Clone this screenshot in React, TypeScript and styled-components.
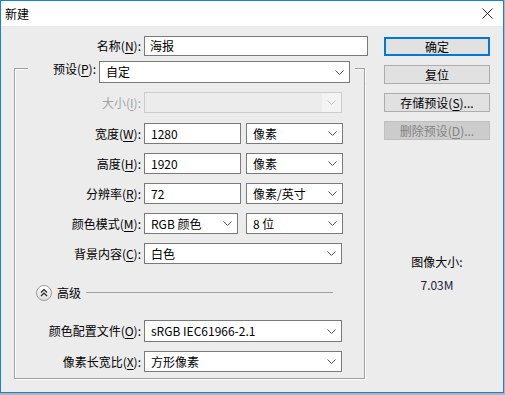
import React from "react";
import styled, { createGlobalStyle } from "styled-components";

const GlobalStyle = createGlobalStyle`
  html, body {
    margin: 0;
    padding: 0;
  }
  body {
    width: 505px;
    height: 395px;
    overflow: hidden;
    background: #b4b4b4;
    font-family: "Noto Sans CJK SC", "Noto Sans", sans-serif;
    font-size: 12px;
    color: #000;
  }
  u {
    text-underline-offset: 2px;
  }
`;

const LINE = "#a0a0a0";

const Chevron = ({ disabled }: { disabled?: boolean }) => (
  <svg width="9" height="5" viewBox="0 0 9 5">
    <polyline
      points="0.5,0.5 4.5,4.5 8.5,0.5"
      fill="none"
      stroke={disabled ? "#c4c4c4" : "#555"}
      strokeWidth="1"
    />
  </svg>
);

const CloseIcon = () => (
  <svg width="11" height="11" viewBox="0 0 11 11">
    <path d="M0.5 0.5 L10.5 10.5 M10.5 0.5 L0.5 10.5" stroke="#111" strokeWidth="0.9" />
  </svg>
);

const AdvancedIcon = () => (
  <svg width="16" height="16" viewBox="0 0 16 16">
    <defs>
      <linearGradient id="adv" x1="0" y1="0" x2="0" y2="1">
        <stop offset="0" stopColor="#ffffff" />
        <stop offset="1" stopColor="#dcdcdc" />
      </linearGradient>
    </defs>
    <circle cx="8" cy="8" r="7.5" fill="url(#adv)" stroke="#9c9c9c" />
    <polyline points="5,7.5 8,4.5 11,7.5" fill="none" stroke="#222" strokeWidth="1.2" />
    <polyline points="5,11 8,8 11,11" fill="none" stroke="#222" strokeWidth="1.2" />
  </svg>
);

const App = () => {
  return (
    <>
      <GlobalStyle />
      <Window>
        <TitleBar>
          <Title>新建</Title>
          <CloseIcon />
        </TitleBar>
        <Body>
          <LeftColumn>
            <Row>
              <Label $w={127}>
                名称(<u>N</u>):
              </Label>
              <TextBox $w={224} $h={20} $pad={5}>
                海报
              </TextBox>
            </Row>

            <GroupBox>
              <GroupHeader>
                <LeftCorner />
                <Label $w={68}>
                  预设(<u>P</u>):
                </Label>
                <Select $w={251} $h={22}>
                  <span>自定</span>
                  <Chevron />
                </Select>
                <RightCorner />
              </GroupHeader>

              <GroupBody>
                <Row $mb={10}>
                  <Label $w={126} $disabled>
                    大小(<u>I</u>):
                  </Label>
                  <Select $w={198} $h={21} $disabled>
                    <span />
                    <ArrowBox>
                      <Chevron disabled />
                    </ArrowBox>
                  </Select>
                </Row>
                <Row $mb={9}>
                  <Label $w={126}>
                    宽度(<u>W</u>):
                  </Label>
                  <TextBox $w={97} $h={21} $pad={6}>
                    1280
                  </TextBox>
                  <Select $w={97} $h={21} $ml={5}>
                    <span>像素</span>
                    <Chevron />
                  </Select>
                </Row>
                <Row $mb={9}>
                  <Label $w={126}>
                    高度(<u>H</u>):
                  </Label>
                  <TextBox $w={97} $h={21} $pad={6}>
                    1920
                  </TextBox>
                  <Select $w={97} $h={21} $ml={5}>
                    <span>像素</span>
                    <Chevron />
                  </Select>
                </Row>
                <Row $mb={9}>
                  <Label $w={126}>
                    分辨率(<u>R</u>):
                  </Label>
                  <TextBox $w={97} $h={21} $pad={6}>
                    72
                  </TextBox>
                  <Select $w={97} $h={21} $ml={5}>
                    <span>像素/英寸</span>
                    <Chevron />
                  </Select>
                </Row>
                <Row $mb={9}>
                  <Label $w={126}>
                    颜色模式(<u>M</u>):
                  </Label>
                  <Select $w={94} $h={21}>
                    <span>RGB 颜色</span>
                    <Chevron />
                  </Select>
                  <Select $w={97} $h={21} $ml={8}>
                    <span>8 位</span>
                    <Chevron />
                  </Select>
                </Row>
                <Row>
                  <Label $w={126}>
                    背景内容(<u>C</u>):
                  </Label>
                  <Select $w={198} $h={21}>
                    <span>白色</span>
                    <Chevron />
                  </Select>
                </Row>

                <AdvancedRow>
                  <AdvancedIcon />
                  <AdvancedText>高级</AdvancedText>
                  <Divider />
                </AdvancedRow>

                <Row $mb={9}>
                  <Label $w={126}>
                    颜色配置文件(<u>O</u>):
                  </Label>
                  <Select $w={198} $h={22}>
                    <span>sRGB IEC61966-2.1</span>
                    <Chevron />
                  </Select>
                </Row>
                <Row>
                  <Label $w={126}>
                    像素长宽比(<u>X</u>):
                  </Label>
                  <Select $w={198} $h={21}>
                    <span>方形像素</span>
                    <Chevron />
                  </Select>
                </Row>
              </GroupBody>
            </GroupBox>
          </LeftColumn>

          <RightColumn>
            <Button $default>确定</Button>
            <Button>复位</Button>
            <Button>
              存储预设(<u>S</u>)...
            </Button>
            <Button $disabled>
              删除预设(<u>D</u>)...
            </Button>
            <ImageSize>
              <ImageSizeLabel>图像大小:</ImageSizeLabel>
              <ImageSizeValue>7.03M</ImageSizeValue>
            </ImageSize>
          </RightColumn>
        </Body>
      </Window>
    </>
  );
};

const Window = styled.div`
  box-sizing: border-box;
  width: 504px;
  height: 393px;
  border: 1px solid #1883d7;
  background: #ececec;
  display: flex;
  flex-direction: column;
`;

const TitleBar = styled.div`
  height: 25px;
  background: #ffffff;
  display: flex;
  align-items: center;
  justify-content: space-between;
  padding: 0 10px 0 4px;
`;

const Title = styled.div`
  font-size: 12px;
  line-height: 16px;
`;

const Body = styled.div`
  flex: 1;
  display: flex;
  padding: 10px 0 0 13px;
`;

const LeftColumn = styled.div`
  width: 354px;
  display: flex;
  flex-direction: column;
`;

const Row = styled.div<{ $mb?: number }>`
  display: flex;
  align-items: center;
  margin-bottom: ${(p) => p.$mb || 0}px;
`;

const Label = styled.div<{ $w: number; $disabled?: boolean }>`
  width: ${(p) => p.$w}px;
  padding-right: 3px;
  flex-shrink: 0;
  text-align: right;
  white-space: nowrap;
  line-height: 16px;
  color: ${(p) => (p.$disabled ? "#a3a3a3" : "#000")};
`;

const TextBox = styled.div<{ $w: number; $h: number; $pad: number }>`
  box-sizing: border-box;
  width: ${(p) => p.$w}px;
  height: ${(p) => p.$h}px;
  border: 1px solid #7a7a7a;
  background: #fff;
  padding-left: ${(p) => p.$pad}px;
  display: flex;
  align-items: center;
  line-height: 16px;
  white-space: nowrap;
`;

const Select = styled.div<{ $w: number; $h: number; $ml?: number; $disabled?: boolean }>`
  box-sizing: border-box;
  width: ${(p) => p.$w}px;
  height: ${(p) => p.$h}px;
  margin-left: ${(p) => p.$ml || 0}px;
  border: 1px solid ${(p) => (p.$disabled ? "#cccccc" : "#7a7a7a")};
  background: ${(p) => (p.$disabled ? "#ececec" : "#fff")};
  padding: 0 ${(p) => (p.$disabled ? 0 : 5)}px 0 6px;
  display: flex;
  align-items: center;
  justify-content: space-between;
  line-height: 16px;
  white-space: nowrap;
`;

const ArrowBox = styled.div`
  width: 19px;
  align-self: stretch;
  background: #f3f3f3;
  display: flex;
  align-items: center;
  justify-content: center;
`;

const GroupBox = styled.div`
  margin-top: 5px;
  width: 351px;
  display: flex;
  flex-direction: column;
`;

const GroupHeader = styled.div`
  display: flex;
  align-items: stretch;
`;

const LeftCorner = styled.div`
  width: 14px;
  margin-top: 7px;
  box-sizing: border-box;
  border-top: 1px solid ${LINE};
  border-left: 1px solid ${LINE};
  box-shadow: inset 1px 1px 0 #fff;
`;

const RightCorner = styled.div`
  width: 10px;
  margin-left: 5px;
  margin-top: 7px;
  box-sizing: border-box;
  border-top: 1px solid ${LINE};
  border-right: 1px solid ${LINE};
  box-shadow: inset 0 1px 0 #fff, 1px 0 0 #fff;
`;

const GroupBody = styled.div`
  border: 1px solid ${LINE};
  border-top: none;
  box-shadow: inset 1px 0 0 #fff, 1px 1px 0 #fff;
  padding: 9px 0 6px 0;
  display: flex;
  flex-direction: column;
`;

const AdvancedRow = styled.div`
  display: flex;
  align-items: center;
  height: 16px;
  margin: 21px 31px 19px 21px;
`;

const AdvancedText = styled.div`
  margin-left: 5px;
  line-height: 16px;
`;

const Divider = styled.div`
  flex: 1;
  height: 1px;
  margin-left: 5px;
  margin-top: -1px;
  background: ${LINE};
`;

const RightColumn = styled.div`
  width: 106px;
  margin-left: 16px;
  margin-top: 1px;
  display: flex;
  flex-direction: column;
  gap: 9px;
`;

const Button = styled.div<{ $default?: boolean; $disabled?: boolean }>`
  box-sizing: border-box;
  height: 19px;
  display: flex;
  align-items: center;
  justify-content: center;
  white-space: nowrap;
  line-height: 16px;
  background: ${(p) => (p.$disabled ? "#cccccc" : "#e1e1e1")};
  border: 1px solid
    ${(p) => (p.$default ? "#0078d7" : p.$disabled ? "#bfbfbf" : "#adadad")};
  box-shadow: ${(p) => (p.$default ? "inset 0 0 0 1px #0078d7" : "none")};
  color: ${(p) => (p.$disabled ? "#838383" : "#000")};
`;

const ImageSize = styled.div`
  margin-top: 105px;
  display: flex;
  flex-direction: column;
  align-items: center;
`;

const ImageSizeLabel = styled.div`
  line-height: 16px;
`;

const ImageSizeValue = styled.div`
  margin-top: 7px;
  line-height: 16px;
  color: #1c1c3c;
`;

export default App;
